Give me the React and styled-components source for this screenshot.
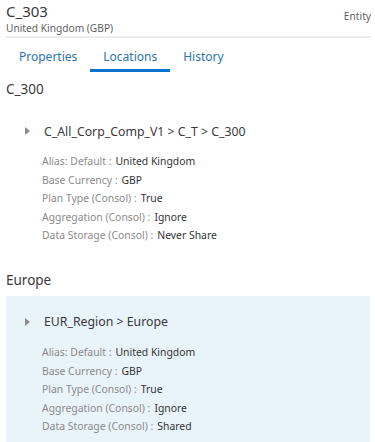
import React from 'react'
import styled, { createGlobalStyle } from 'styled-components'

const GlobalStyle = createGlobalStyle`
    body {
        margin: 0;
        background: #fff;
        font-family: "Noto Sans", "Open Sans", sans-serif;
        color: #333;
    }
`;

const Page = styled.div`
    width: 375px;
    height: 442px;
    overflow: hidden;
`;

const Header = styled.div`
    display: flex;
    justify-content: space-between;
    align-items: flex-start;
    padding: 2px 4px 0 6px;
    height: 34px;
`;

const Title = styled.div`
    font-size: 15px;
    line-height: 19px;
    color: #3a3a3a;
`;

const Sub = styled.div`
    font-size: 10.2px;
    line-height: 15px;
    color: #5f5f5f;
`;

const Kind = styled.div`
    font-size: 10.2px;
    line-height: 15px;
    margin-top: 7px;
    color: #5f5f5f;
`;

const Divider = styled.div`
    height: 2px;
    margin: 0 4px 0 6px;
    background: #ececec;
`;

const Tabs = styled.div`
    display: flex;
    padding: 0 6px;
    height: 34px;
`;

const Tab = styled.div`
    font-size: 12px;
    padding: 10px 13px 0;
    color: #2b74b2;
    border-bottom: 3px solid ${p => (p.$active ? '#0572ce' : 'transparent')};
    box-sizing: border-box;
    height: 34px;
`;

const Heading = styled.div`
    font-size: 13.5px;
    line-height: 20px;
    padding: 0 6px;
    margin-top: ${p => p.$top}px;
    color: #3a3a3a;
`;

const Card = styled.div`
    margin: 6px 5px 0 6px;
    padding: 16px 0 25px;
    background: ${p => (p.$selected ? '#e8f3fa' : 'transparent')};
`;

const PathRow = styled.div`
    display: flex;
    align-items: center;
    height: 20px;
    padding-left: 19px;
    font-size: 12.3px;
    color: #3a3a3a;
    margin-bottom: 11px;
`;

const Caret = styled.span`
    width: 0;
    height: 0;
    border-top: 4px solid transparent;
    border-bottom: 4px solid transparent;
    border-left: 5px solid #8a8a8a;
    margin-right: 14px;
`;

const Row = styled.div`
    font-size: 10.4px;
    line-height: 18.6px;
    padding-left: 36px;
    white-space: nowrap;
`;

const Label = styled.span`
    color: #8a8a8a;
`;

const Value = styled.span`
    color: #333;
    margin-left: 4px;
`;

const locations = [
    {
        name: 'C_300',
        path: 'C_All_Corp_Comp_V1 > C_T > C_300',
        storage: 'Never Share',
        selected: false,
        top: 7,
    },
    {
        name: 'Europe',
        path: 'EUR_Region > Europe',
        storage: 'Shared',
        selected: true,
        top: 0,
    },
]

function LocationCard({ loc }) {
    const props = [
        ['Alias: Default :', 'United Kingdom'],
        ['Base Currency :', 'GBP'],
        ['Plan Type (Consol) :', 'True'],
        ['Aggregation (Consol) :', 'Ignore'],
        ['Data Storage (Consol) :', loc.storage],
    ]
    return (
        <div>
            <Heading $top={loc.top}>{loc.name}</Heading>
            <Card $selected={loc.selected}>
                <PathRow>
                    <Caret />
                    {loc.path}
                </PathRow>
                {props.map(([k, v]) => (
                    <Row key={k}>
                        <Label>{k}</Label>
                        <Value>{v}</Value>
                    </Row>
                ))}
            </Card>
        </div>
    )
}

export default function App() {
    return (
        <Page>
            <GlobalStyle />
            <Header>
                <div>
                    <Title>C_303</Title>
                    <Sub>United Kingdom (GBP)</Sub>
                </div>
                <Kind>Entity</Kind>
            </Header>
            <Divider />
            <Tabs>
                <Tab>Properties</Tab>
                <Tab $active>Locations</Tab>
                <Tab>History</Tab>
            </Tabs>
            {locations.map(loc => (
                <LocationCard key={loc.name} loc={loc} />
            ))}
        </Page>
    )
}
